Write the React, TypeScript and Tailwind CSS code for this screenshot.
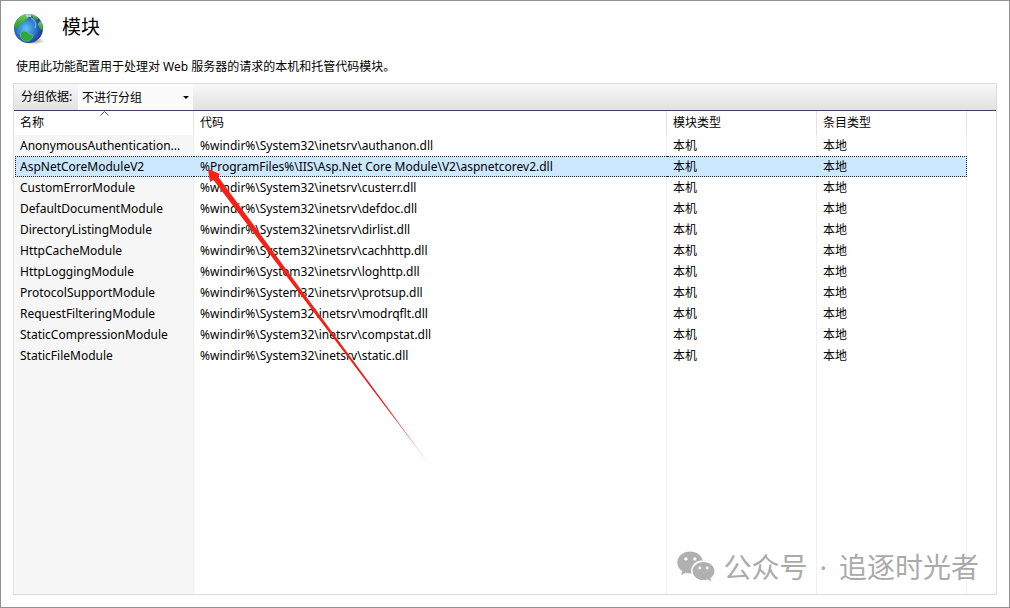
import { useState } from 'react'

interface ModuleEntry {
  name: string
  label?: string
  code: string
}

const modules: ModuleEntry[] = [
  {
    name: 'AnonymousAuthenticationModule',
    label: 'AnonymousAuthentication...',
    code: '%windir%\\System32\\inetsrv\\authanon.dll',
  },
  {
    name: 'AspNetCoreModuleV2',
    code: '%ProgramFiles%\\IIS\\Asp.Net Core Module\\V2\\aspnetcorev2.dll',
  },
  { name: 'CustomErrorModule', code: '%windir%\\System32\\inetsrv\\custerr.dll' },
  { name: 'DefaultDocumentModule', code: '%windir%\\System32\\inetsrv\\defdoc.dll' },
  { name: 'DirectoryListingModule', code: '%windir%\\System32\\inetsrv\\dirlist.dll' },
  { name: 'HttpCacheModule', code: '%windir%\\System32\\inetsrv\\cachhttp.dll' },
  { name: 'HttpLoggingModule', code: '%windir%\\System32\\inetsrv\\loghttp.dll' },
  { name: 'ProtocolSupportModule', code: '%windir%\\System32\\inetsrv\\protsup.dll' },
  { name: 'RequestFilteringModule', code: '%windir%\\System32\\inetsrv\\modrqflt.dll' },
  { name: 'StaticCompressionModule', code: '%windir%\\System32\\inetsrv\\compstat.dll' },
  { name: 'StaticFileModule', code: '%windir%\\System32\\inetsrv\\static.dll' },
]

function GlobeIcon() {
  return (
    <svg viewBox="0 0 32 32" className="size-8" aria-hidden="true">
      <defs>
        <radialGradient id="ocean" cx="0.42" cy="0.5" r="0.62">
          <stop offset="0" stopColor="#63c4f2" />
          <stop offset="0.45" stopColor="#3483d6" />
          <stop offset="0.85" stopColor="#20419c" />
          <stop offset="1" stopColor="#1c2b6c" />
        </radialGradient>
        <linearGradient id="land" x1="0" y1="0" x2="0" y2="1">
          <stop offset="0" stopColor="#76cf47" />
          <stop offset="1" stopColor="#22923c" />
        </linearGradient>
        <radialGradient id="shadow">
          <stop offset="0" stopColor="#555" stopOpacity="0.7" />
          <stop offset="1" stopColor="#555" stopOpacity="0" />
        </radialGradient>
        <clipPath id="disc">
          <circle cx="14.5" cy="15.5" r="14.5" />
        </clipPath>
      </defs>
      <ellipse cx="19" cy="28" rx="12" ry="3.5" fill="url(#shadow)" />
      <circle cx="14.5" cy="15.5" r="14.5" fill="url(#ocean)" />
      <g clipPath="url(#disc)">
        <path
          d="M1 16 0 10 4 4 10 1 13 2 15 4 13 6 11 7 10 9 7 10 6 13 3 15Z"
          fill="url(#land)"
        />
        <path d="M18 2 22 2 25 6 22 7 19 5Z" fill="url(#land)" />
        <path d="M24 11 26 8 30 11 30 18 26 16 25 14Z" fill="url(#land)" />
        <path
          d="M6 20 9 18 13 18.500 15 21 19 22 18.500 25 15 28 10 28 7 25Z"
          fill="#2fa444"
          stroke="#77cf67"
          strokeWidth="0.6"
        />
        <path d="M11 1 18 1 17 4 13 4Z" fill="#d9eff8" opacity="0.75" />
        <path d="M17 5C21 7 23 11 21 15" stroke="#a5e0f7" strokeWidth="1.5" fill="none" opacity="0.5" />
      </g>
    </svg>
  )
}

function WeChatIcon() {
  return (
    <svg viewBox="0 0 38 32" className="h-8 w-[38px]" fill="#b0b0b0" aria-hidden="true">
      <path
        fillRule="evenodd"
        d="M13.2 0.5C6 0.5 0.3 5.3 0.3 11.5c0 3.600 1.900 6.700 5 8.700L4.200 24.300l4.600-2.500c1.900.6 3.700.8 5.700.7A10.500 10 0 0 1 25.900 9.700C24.600 4.200 19.400.5 13.200.5ZM8.900 6.200a1.700 1.700 0 1 0 0 3.400 1.700 1.700 0 0 0 0-3.400Zm8.900 0a1.700 1.700 0 1 0 0 3.400 1.700 1.700 0 0 0 0-3.400Z"
      />
      <path
        fillRule="evenodd"
        d="M26.500 10.900C20.400 10.900 15.600 15 15.600 20s4.800 9.100 10.900 9.100c1.500 0 2.900-.2 4.200-.7l3.700 2.200-1-3.500c2.500-1.700 4.100-4.200 4.100-7.100 0-5-4.900-9.100-11-9.100ZM22.800 15.600a1.400 1.400 0 1 0 0 2.800 1.400 1.400 0 0 0 0-2.800Zm7.500 0a1.400 1.400 0 1 0 0 2.800 1.400 1.400 0 0 0 0-2.800Z"
      />
    </svg>
  )
}

function PointerArrow() {
  return (
    <svg
      viewBox="0 0 230 305"
      className="pointer-events-none absolute left-[204px] top-[165px] h-[305px] w-[230px]"
      aria-hidden="true"
    >
      <defs>
        <linearGradient id="tail" gradientUnits="userSpaceOnUse" x1="5" y1="5" x2="227" y2="302">
          <stop offset="0" stopColor="#fb2014" />
          <stop offset="0.8" stopColor="#e6231a" />
          <stop offset="1" stopColor="#e0392f" stopOpacity="0.2" />
        </linearGradient>
      </defs>
      <path d="M3 3 15 8 13 10.500 227 302 8.500 14 5 16Z" fill="url(#tail)" />
    </svg>
  )
}

export default function App() {
  const [selected, setSelected] = useState('AspNetCoreModuleV2')
  const [grouping, setGrouping] = useState('none')

  return (
    <div className="relative flex min-h-screen flex-col border border-[#929292] bg-white px-3 pb-3 font-['Noto_Sans','Noto_Sans_CJK_SC',sans-serif] text-xs text-black">
      <header className="flex items-start gap-4 px-px pt-3">
        <GlobeIcon />
        <h1 className="text-[19px] leading-7">模块</h1>
      </header>
      <p className="px-[3px] pt-[13px] pb-[7px] leading-[18px]">
        使用此功能配置用于处理对 Web 服务器的请求的本机和托管代码模块。
      </p>

      <main className="flex flex-1 flex-col border border-[#dcdcdc]">
        <div className="flex h-[27px] border-b border-[#443e66] bg-linear-to-b from-[#f8f8f8] to-[#e1e1e1]">
          <label htmlFor="grouping" className="w-16 pl-[7px] leading-[26px]">
            分组依据:
          </label>
          <div className="relative w-[115px] bg-[#fbfbfb]">
            <select
              id="grouping"
              value={grouping}
              onChange={(e) => setGrouping(e.target.value)}
              className="h-full w-full appearance-none bg-transparent pt-px pl-1 outline-none"
            >
              <option value="none">不进行分组</option>
              <option value="entry">条目类型</option>
              <option value="module">模块类型</option>
            </select>
            <svg
              viewBox="0 0 6 3"
              className="pointer-events-none absolute right-1 top-3 h-[3px] w-1.5"
              aria-hidden="true"
            >
              <path d="M0 0H6L3 3Z" />
            </svg>
          </div>
        </div>

        <div className="flex flex-1 flex-col px-px">
          <table className="w-full flex-1 table-fixed border-separate border-spacing-0 text-left">
            <colgroup>
              <col className="w-[179px]" />
              <col />
              <col className="w-[150px]" />
              <col className="w-[150px]" />
              <col className="w-7" />
            </colgroup>
            <thead>
              <tr className="h-6 *:border-r *:border-[#e2e2e2] *:p-0 *:font-normal">
                <th className="relative">
                  <span className="pl-[5px]">名称</span>
                  <svg
                    viewBox="0 0 9 5"
                    className="absolute top-0 left-[85px] h-[5px] w-[9px]"
                    fill="none"
                    stroke="#555"
                    aria-hidden="true"
                  >
                    <path d="M0.500 4.500 4.500 0.500 8.500 4.500" />
                  </svg>
                </th>
                <th>
                  <span className="pl-1.5">代码</span>
                </th>
                <th>
                  <span className="pl-1.5">模块类型</span>
                </th>
                <th>
                  <span className="pl-1.5">条目类型</span>
                </th>
                <td className="border-r-0!" />
              </tr>
            </thead>
            <tbody>
              {modules.map((m) => {
                const active = m.name === selected
                const cell = active
                  ? 'border-y border-dotted border-[#222] bg-[#cce8ff] p-0'
                  : 'border-r border-[#edf1f4] p-0'
                return (
                  <tr
                    key={m.name}
                    onClick={() => setSelected(m.name)}
                    className="h-[21px] cursor-default whitespace-nowrap leading-[18px]"
                  >
                    <td
                      title={m.name}
                      className={active ? `${cell} border-l pl-1!` : `${cell} bg-[#f6f6f6] pl-[5px]!`}
                    >
                      {m.label ?? m.name}
                    </td>
                    <td className={`${cell} pl-1.5!`}>{m.code}</td>
                    <td className={`${cell} pl-1.5!`}>本机</td>
                    <td className={active ? `${cell} border-r pl-1.5!` : `${cell} pl-1.5!`}>本地</td>
                    <td />
                  </tr>
                )
              })}
              {/* empty row that carries the column lines to the bottom */}
              <tr className="*:border-r *:border-[#edf1f4]">
                <td className="bg-[#f6f6f6]" />
                <td />
                <td />
                <td />
                <td className="border-r-0!" />
              </tr>
            </tbody>
          </table>
        </div>
      </main>

      <PointerArrow />

      <div className="pointer-events-none absolute right-[30px] bottom-6 flex items-center gap-2 text-[28px] leading-8 text-[#aaa]">
        <WeChatIcon />
        <p className="flex gap-3">
          <span>公众号</span>
          <span>·</span>
          <span>追逐时光者</span>
        </p>
      </div>
    </div>
  )
}
